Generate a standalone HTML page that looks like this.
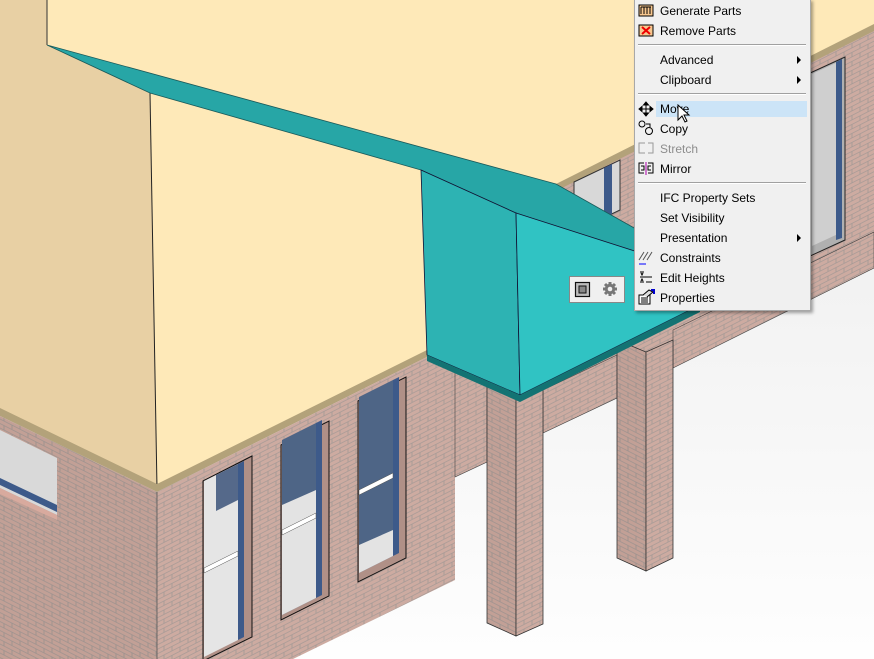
<!DOCTYPE html>
<html><head><meta charset="utf-8"><style>
html,body{margin:0;padding:0;width:874px;height:659px;overflow:hidden;background:#fff}
svg{position:absolute;left:0;top:0}
.menu{position:absolute;left:634px;top:-1px;width:175px;height:310px;background:#f0f0f0;border:1px solid #a8a8a8;box-shadow:2px 2px 3px rgba(0,0,0,.35);font-family:"Liberation Sans",sans-serif;font-size:12px;color:#000}
.it{position:absolute;left:25px;height:18px;line-height:18px;margin-top:1px}
.sep{position:absolute;left:3px;width:168px;height:1px;background:#a0a0a0;border-bottom:1px solid #fff}
.ar{position:absolute;left:162px;width:0;height:0;border-top:4px solid transparent;border-bottom:4px solid transparent;border-left:4px solid #000}
.ic{position:absolute;left:3px}
</style></head><body>
<svg width="874" height="659" viewBox="0 0 874 659">
<defs>
<linearGradient id="fl" x1="0" y1="0" x2="0" y2="1"><stop offset="0" stop-color="#e9e9e9"/><stop offset="1" stop-color="#fefefe"/></linearGradient>
<pattern id="brL" width="16" height="9" patternUnits="userSpaceOnUse" patternTransform="skewY(27)">
<rect width="16" height="9" fill="#c2a096"/>
<path d="M0 0.5H16M0 5H16M4 0.5V5M12 5V9" stroke="#9a918e" stroke-width="0.8" fill="none"/>
</pattern>
<pattern id="brR" width="16" height="9" patternUnits="userSpaceOnUse" patternTransform="skewY(-27)">
<rect width="16" height="9" fill="#cdaba1"/>
<path d="M0 0.5H16M0 5H16M4 0.5V5M12 5V9" stroke="#a39995" stroke-width="0.8" fill="none"/>
</pattern>
</defs>
<rect width="874" height="659" fill="url(#fl)"/>
<polygon points="47,0 874,0 874,25 556,186 427,355 157,488 150,93 47,45" fill="#fee9b8"/>
<polygon points="556,188 874,28 874,268 673,368 617,398 543,433 455,477 427,360" fill="url(#brR)"/>
<polygon points="556,184 874,24 874,31 556,191" fill="#b3a27a"/>
<polygon points="574,182 620,160 620,210 574,232" fill="#d8d8d8" stroke="#333" stroke-width="1"/>
<polygon points="604,168 612,164 612,214 604,218" fill="#3d5a8a"/>
<polygon points="808,74 845,57 845,240 808,257" fill="#b0b0b0" stroke="#222" stroke-width="1"/>
<polygon points="812,74 838,62 838,234 812,246" fill="#cfcfcf"/>
<polygon points="836,62 842,59 842,238 836,240" fill="#3d5a8a"/>
<polygon points="0,0 47,0 47,45 150,93 157,488 0,410" fill="#e8d0a4"/>
<line x1="47" y1="0" x2="47" y2="45" stroke="#333" stroke-width="1"/>
<line x1="150" y1="93" x2="157" y2="488" stroke="#222" stroke-width="1"/>
<polygon points="0,408 157,484 427,350 427,357 157,492 0,416" fill="#b3a27a"/>
<polygon points="0,416 157,492 157,659 0,659" fill="url(#brL)"/>
<polygon points="157,492 427,357 455,360 455,580 293,659 157,659" fill="url(#brR)"/>
<line x1="157" y1="492" x2="157" y2="659" stroke="#555" stroke-width="0.8"/>
<polygon points="0,430 57,458 57,515 0,488" fill="#d9d9d9"/>
<polygon points="0,478 57,505 57,512 0,485" fill="#3d5a8a"/>
<polygon points="0,488 57,515 57,520 0,494" fill="#d8aa9e"/>
<g stroke="#111" stroke-width="1">
<polygon points="203,481 252,456 252,637 203,661" fill="#b09087"/>
<polygon points="281,445 329,421 329,596 281,620" fill="#b09087"/>
<polygon points="358,401 406,377 406,558 358,582" fill="#b09087"/>
</g>
<polygon points="204,481 238,464 238,640 204,657" fill="#e5e5e5"/>
<polygon points="238,464 244,461 244,637 238,640" fill="#3d5a8a"/>
<polygon points="216,475 238,464 238,500 216,511" fill="#55698a"/>
<polygon points="204,568 238,551 238,556 204,573" fill="#fff" stroke="#555" stroke-width=".5"/>
<polygon points="282,440 316,423 316,598 282,615" fill="#4e6586"/>
<polygon points="282,505 316,490 316,598 282,615" fill="#e3e3e3"/>
<polygon points="316,423 322,420 322,595 316,598" fill="#3d5a8a"/>
<polygon points="282,530 316,513 316,518 282,535" fill="#fff" stroke="#555" stroke-width=".5"/>
<polygon points="359,397 393,380 393,556 359,573" fill="#4e6586"/>
<polygon points="359,545 393,530 393,556 359,573" fill="#e3e3e3"/>
<polygon points="393,380 399,377 399,553 393,556" fill="#3d5a8a"/>
<polygon points="359,490 393,473 393,478 359,495" fill="#fff" stroke="#555" stroke-width=".5"/>
<polygon points="455,360 487,385 487,462 455,477" fill="url(#brR)" stroke="#444" stroke-width=".6"/>
<polygon points="543,390 617,355 617,398 543,433" fill="url(#brR)" stroke="#444" stroke-width=".6"/>
<polygon points="673,330 874,232 874,268 673,368" fill="url(#brR)" stroke="#444" stroke-width=".6"/>
<polygon points="487,385 516,398 516,636 487,623" fill="url(#brL)" stroke="#333" stroke-width=".8"/>
<polygon points="516,398 543,385 543,624 516,636" fill="url(#brR)" stroke="#333" stroke-width=".8"/>
<polygon points="617,340 646,352 646,571 617,558" fill="url(#brL)" stroke="#333" stroke-width=".8"/>
<polygon points="646,352 673,340 673,558 646,571" fill="url(#brR)" stroke="#333" stroke-width=".8"/>
<polygon points="47,45 556,184 700,265 700,275 516,213 421,170 150,93" fill="#27a6a6" stroke="#1a5a5a" stroke-width=".8"/>
<polygon points="421,170 516,213 520,395 427,355" fill="#2db3b3" stroke="#113" stroke-width=".8"/>
<polygon points="516,213 700,272 700,305 520,395" fill="#30c3c3" stroke="#113" stroke-width=".8"/>
<polygon points="427,355 520,395 700,305 700,312 520,402 427,361" fill="#137373"/>
<rect x="569.5" y="276.5" width="55" height="26" fill="#f0f0f0" stroke="#888"/>
<rect x="575.5" y="282.5" width="14" height="14" fill="#bdbdbd" stroke="#111" stroke-width="1.2"/>
<rect x="579" y="286" width="7" height="7" fill="#888" stroke="#111" stroke-width="1"/>
<g transform="translate(610,289)" fill="#777">
<circle r="5.2"/>
<g stroke="#777" stroke-width="3"><line x1="0" y1="-7" x2="0" y2="7"/><line x1="-7" y1="0" x2="7" y2="0"/><line x1="-5" y1="-5" x2="5" y2="5"/><line x1="-5" y1="5" x2="5" y2="-5"/></g>
<circle r="2.3" fill="#f0f0f0"/>
</g>
</svg>
<div class="menu">
<svg class="ic" style="top:4px" width="16" height="14"><rect x="1" y="1" width="14" height="11" fill="#f7c78f" stroke="#000"/><path d="M3 3v7M6 3v7M9 3v7M12 3v7M3 3h10" stroke="#000" fill="none"/></svg>
<div class="it" style="top:1px">Generate Parts</div>
<svg class="ic" style="top:24px" width="16" height="14"><rect x="1" y="1" width="14" height="11" fill="#f7c78f" stroke="#000"/><path d="M4 3l8 7M12 3l-8 7" stroke="#e00" stroke-width="2"/></svg>
<div class="it" style="top:21px">Remove Parts</div>
<div class="sep" style="top:44px"></div>
<div class="it" style="top:50px">Advanced</div><div class="ar" style="top:56px"></div>
<div class="it" style="top:70px">Clipboard</div><div class="ar" style="top:76px"></div>
<div class="sep" style="top:93px"></div>
<div style="position:absolute;left:21px;top:101px;width:151px;height:16px;background:#cce4f7"></div>
<svg class="ic" style="top:101px" width="16" height="16"><path d="M8 1v14M1 8h14M8 1l-2.5 3h5zM8 15l-2.5-3h5zM1 8l3-2.5v5zM15 8l-3-2.5v5z" stroke="#000" fill="#000"/></svg>
<div class="it" style="top:99px">Move</div>
<svg class="ic" style="top:120px" width="16" height="16"><circle cx="4" cy="4" r="3" fill="none" stroke="#000"/><circle cx="11" cy="11" r="3.5" fill="none" stroke="#000"/><path d="M8 4h4v3" stroke="#000" fill="none"/></svg>
<div class="it" style="top:119px">Copy</div>
<svg class="ic" style="top:142px" width="16" height="12"><path d="M7 1H1v10h6M10 1h5v10h-5" stroke="#999" fill="none"/></svg>
<div class="it" style="top:139px;color:#8d8d8d">Stretch</div>
<svg class="ic" style="top:162px" width="16" height="13"><path d="M6 1H1v10h5M10 1h5v10h-5M3 4h3v4H3M13 4h-3v4h3" stroke="#000" fill="none"/><path d="M8 0v13" stroke="#a0a"/></svg>
<div class="it" style="top:159px">Mirror</div>
<div class="sep" style="top:182px"></div>
<div class="it" style="top:188px">IFC Property Sets</div>
<div class="it" style="top:208px">Set Visibility</div>
<div class="it" style="top:228px">Presentation</div><div class="ar" style="top:234px"></div>
<svg class="ic" style="top:250px" width="16" height="16"><path d="M1 10l5-8M5 10l5-8M9 10l5-8M2 14h6" stroke="#555" fill="none"/><path d="M1 14h7" stroke="#00f"/></svg>
<div class="it" style="top:248px">Constraints</div>
<svg class="ic" style="top:270px" width="16" height="16"><path d="M2 2h4M2 7h12M2 12h4M8 12h6" stroke="#000" fill="none"/><path d="M3 3l1 2 1-2M3 11l1-2 1 2" stroke="#000" fill="none"/></svg>
<div class="it" style="top:268px">Edit Heights</div>
<svg class="ic" style="top:289px" width="17" height="16"><rect x="1" y="6" width="11" height="9" fill="#fff" stroke="#000"/><path d="M3 9h7M3 11h7M3 13h7" stroke="#000"/><path d="M5 6l6-5 4 2-6 5" fill="#ddd" stroke="#000"/><path d="M13 1h3v4" stroke="#00c" stroke-width="2" fill="none"/></svg>
<div class="it" style="top:288px">Properties</div>
<svg style="position:absolute;left:42px;top:104px" width="14" height="20"><path d="M1 1v15l4-4 3 6 2-1-3-6h5z" fill="#fff" stroke="#000"/></svg>
</div>
</body></html>
